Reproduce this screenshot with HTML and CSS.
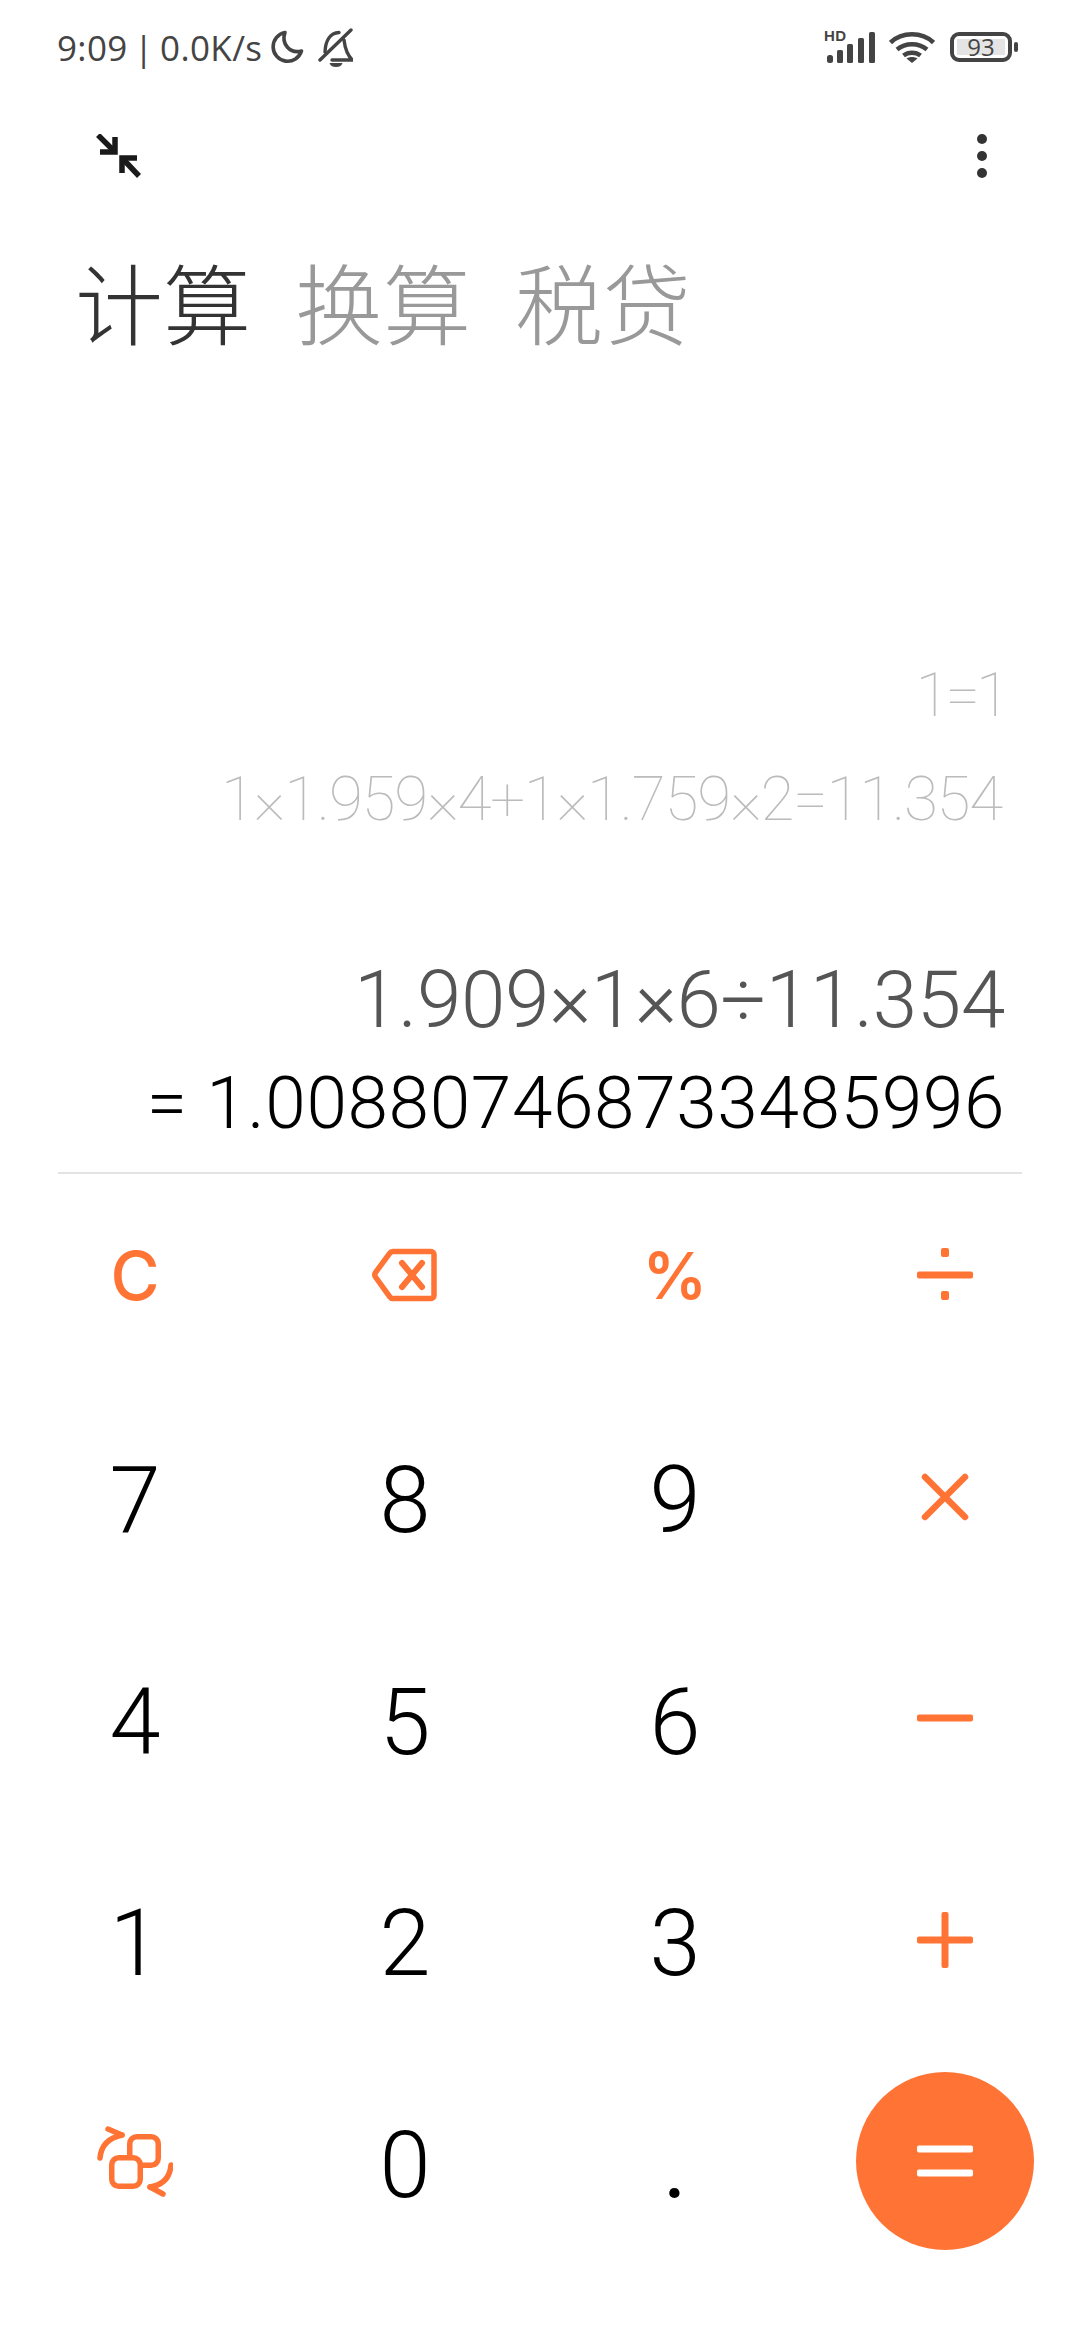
FILE: index.html
```html
<!DOCTYPE html>
<html lang="zh-CN">
<head>
<meta charset="utf-8">
<title>计算器</title>
<link rel="stylesheet" href="styles.css">
</head>
<body>
<main class="app">
  <header class="status">
    <div class="status-left">
      <span class="status-text">9:09 | 0.0K/s</span>
      <svg class="ico-moon" width="36" height="36" viewBox="0 0 36 36"><path d="M17 3.500A14.500 14.500 0 1 0 33.500 22C22 25 13 15 17 3.500Z" fill="none" stroke="#444" stroke-width="3.600" stroke-linejoin="round"/></svg>
      <svg class="ico-bell" width="36" height="40" viewBox="0 0 36 40"><g fill="none" stroke="#444" stroke-width="3.400" stroke-linecap="round" stroke-linejoin="round"><path d="M8 25C8.500 14 13 6 22 5.500"/><path d="M27 13c1 8 3 15 8.500 20H15"/><path d="M3 33 34 3"/></g><path d="M12.500 36h13c-1 3-3.500 4-6.500 4s-5.500-1-6.500-4Z" fill="#444"/></svg>
    </div>
    <div class="status-right">
      <div class="signal">
        <span class="hd">HD</span>
        <svg width="50" height="32" viewBox="0 0 50 32"><g fill="#444"><rect x="1" y="24" width="6" height="8" rx="2.500"/><rect x="11" y="19" width="6" height="13" rx="1.500"/><rect x="21" y="13" width="6" height="19" rx="1.500"/><rect x="32" y="7" width="6" height="25" rx="1.500"/><rect x="43" y="1" width="6" height="31" rx="1.500"/></g></svg>
      </div>
      <svg class="ico-wifi" width="46" height="32" viewBox="0 0 46 32"><g fill="none" stroke="#444" stroke-width="4.500"><path d="M1.500 11.500C13 .5 33 .5 44.500 11.500"/><path d="M8 18.500c8.500-7 21.500-7 30 0"/><path d="M14.500 24.500c4.800-3.800 12.200-3.800 17 0"/></g><path d="M23 32l-5.500-4.500c3.300-2 7.700-2 11 0Z" fill="#444"/></svg>
      <div class="battery"><span class="battery-level">93</span></div>
      <span class="battery-nub"></span>
    </div>
  </header>

  <div class="toolbar">
    <svg width="46" height="46" viewBox="0 0 46 46"><g fill="none" stroke="#1a1a1a" stroke-width="5.500"><path d="M2 1 19 18"/><path d="M19 3v15H4"/><path d="M43 42 26 24"/><path d="M26 39V24h15"/></g></svg>
    <div class="more"><i></i><i></i><i></i></div>
  </div>

  <nav class="tabs">
    <span class="tab tab-active">计算</span>
    <span class="tab">换算</span>
    <span class="tab">税贷</span>
  </nav>

  <section class="display">
    <div class="history history-first">1=1</div>
    <div class="history">1×1.959×4+1×1.759×2=11.354</div>
    <div class="expression">1.909×1×6÷11.354</div>
    <div class="result">= 1.008807468733485996</div>
  </section>

  <section class="keypad">
    <button class="key key-op key-text">C</button>
    <button class="key key-op" aria-label="退格">
      <svg width="66" height="54" viewBox="0 0 66 54"><path d="M21 3.500h38a3 3 0 0 1 3 3v41a3 3 0 0 1-3 3H21a4 4 0 0 1-3.200-1.700L3.500 29a4 4 0 0 1 0-4.500L17.800 5.200A4 4 0 0 1 21 3.500Z" fill="none" stroke="#ff7435" stroke-width="5.500"/><path d="M30 15l20 24M50 15 30 39" fill="none" stroke="#ff7435" stroke-width="6" stroke-linecap="round"/></svg>
    </button>
    <button class="key key-op key-text key-percent">%</button>
    <button class="key key-op" aria-label="除">
      <svg class="op" viewBox="0 0 60 60"><rect x="2" y="26.500" width="56" height="7" rx="2"/><rect x="26" y="3" width="8" height="9" rx="2"/><rect x="26" y="46" width="8" height="9" rx="2"/></svg>
    </button>

    <button class="key">7</button>
    <button class="key">8</button>
    <button class="key">9</button>
    <button class="key key-op" aria-label="乘">
      <svg class="op" viewBox="0 0 60 60"><path d="M10 10 50 50M50 10 10 50" stroke="#ff7435" stroke-width="6.500" stroke-linecap="round" fill="none"/></svg>
    </button>

    <button class="key">4</button>
    <button class="key">5</button>
    <button class="key">6</button>
    <button class="key key-op" aria-label="减">
      <svg class="op" viewBox="0 0 60 60"><rect x="2" y="26.500" width="56" height="7" rx="2"/></svg>
    </button>

    <button class="key">1</button>
    <button class="key">2</button>
    <button class="key">3</button>
    <button class="key key-op" aria-label="加">
      <svg class="op" viewBox="0 0 60 60"><rect x="2" y="26.500" width="56" height="7" rx="2"/><rect x="26.500" y="2" width="7" height="56" rx="2"/></svg>
    </button>

    <button class="key key-op" aria-label="切换">
      <svg width="76" height="72" viewBox="0 0 76 72"><g fill="none" stroke="#ff7435" stroke-width="5.500" stroke-linecap="round" stroke-linejoin="round"><rect x="32.750" y="11.750" width="28.500" height="28.500" rx="7"/><rect class="swap-front" x="14.750" y="32.750" width="28.500" height="28.500" rx="7"/><path d="M3 33C4 21 11 13 25 10"/><path d="M25 10 11 4"/><path d="M74 40C73 52 66 60 53 62"/><path d="M53 62 66 69"/></g></svg>
    </button>
    <button class="key">0</button>
    <button class="key key-dot">.</button>
    <button class="key key-equals" aria-label="等于">
      <svg class="op" viewBox="0 0 60 60"><rect x="2" y="14.500" width="56" height="7" rx="2"/><rect x="2" y="38.500" width="56" height="7" rx="2"/></svg>
    </button>
  </section>
</main>
</body>
</html>
```

FILE: styles.css
```css
* { box-sizing: border-box; }

html, body { margin: 0; padding: 0; background: #fff; }

.app {
  width: 1080px;
  height: 2340px;
  display: flex;
  flex-direction: column;
  overflow: hidden;
  font-family: Roboto, "Noto Sans CJK SC", sans-serif;
}

/* status bar */
.status {
  height: 94px;
  padding: 0 63px 0 57px;
  display: flex;
  justify-content: space-between;
  align-items: center;
  color: #444;
}
.status-left { display: flex; align-items: center; }
.status-text {
  font-family: "Open Sans", sans-serif;
  font-size: 35px;
  letter-spacing: 0.35px;
  word-spacing: -3px;
  width: 211px;
  white-space: nowrap;
}
.ico-moon { margin-right: 13px; }
.status-right { display: flex; align-items: center; margin-right: -1px; }
.signal { position: relative; width: 50px; height: 32px; margin-right: 13px; }
.signal svg { display: block; }
.hd {
  position: absolute;
  left: -2px;
  top: -3px;
  font: 700 15px/15px "Liberation Sans", sans-serif;
  letter-spacing: 0.5px;
}
.battery {
  width: 62px;
  height: 30px;
  margin-left: 15px;
  padding: 3px;
  border: 4.5px solid #444;
  border-radius: 9px;
  display: flex;
}
.battery-level {
  flex: 1;
  background: #e4e4e4;
  text-align: center;
  font: 24px/15px "Open Sans", sans-serif;
}
.battery-nub {
  width: 4px;
  height: 10px;
  margin-left: 2px;
  background: #444;
  border-radius: 2px;
}

/* toolbar */
.toolbar {
  height: 126px;
  padding: 0 93px 0 96px;
  display: flex;
  justify-content: space-between;
  align-items: center;
}
.more { display: flex; flex-direction: column; gap: 7px; margin-top: -2px; }
.more i {
  display: block;
  width: 10px;
  height: 10px;
  border-radius: 50%;
  background: #333;
}

/* mode tabs */
.tabs {
  padding: 36px 0 0 75px;
  display: flex;
  gap: 44px;
}
.tab {
  font-family: "Noto Sans CJK SC", sans-serif;
  font-weight: 300;
  font-size: 88px;
  line-height: 88px;
  color: #999;
}
.tab-active { color: #333; }

/* calculation display */
.display {
  flex: 1;
  margin: 0 58px;
  padding: 0 20px 33px 0;
  border-bottom: 2px solid #e3e3e3;
  display: flex;
  flex-direction: column;
  justify-content: flex-end;
  align-items: flex-end;
  font-weight: 300;
  white-space: nowrap;
}
.history {
  font-size: 62px;
  font-weight: 100;
  line-height: 62px;
  letter-spacing: -1.25px;
  color: #bbb;
  margin-bottom: 41px;
}
.history-first {
  margin: 0 -4px 42px 0;
  letter-spacing: -4px;
}
.expression {
  font-size: 80px;
  line-height: 80px;
  letter-spacing: -0.3px;
  color: #555;
  margin: 89px -3px 0 0;
}
.result {
  font-size: 73px;
  line-height: 72px;
  letter-spacing: 0.6px;
  color: #000;
  margin: 27px -3px 0 0;
}

/* keypad */
.keypad {
  padding: 12px 0 90px;
  display: grid;
  grid-template-columns: repeat(4, 270px);
  grid-auto-rows: 178px;
  row-gap: 43.500px;
}
.key {
  border: 0;
  padding: 8px 0 0;
  background: none;
  display: flex;
  justify-content: center;
  align-items: center;
  font-family: Roboto, sans-serif;
  font-weight: 300;
  font-size: 92px;
  color: #000;
}
.key-dot { font-weight: 400; }
.key-op { color: #ff7435; padding: 0; }
.key-text { font-family: Inter, sans-serif; font-size: 67px; font-weight: 500; }
.key-percent { font-size: 64px; font-weight: 600; }
.op { width: 60px; height: 60px; fill: #ff7435; }
.swap-front { fill: #fff; }
.key-equals {
  width: 178px;
  padding: 0;
  justify-self: center;
  border-radius: 50%;
  background: #ff7435;
}
.key-equals .op { fill: #fff; }
```
